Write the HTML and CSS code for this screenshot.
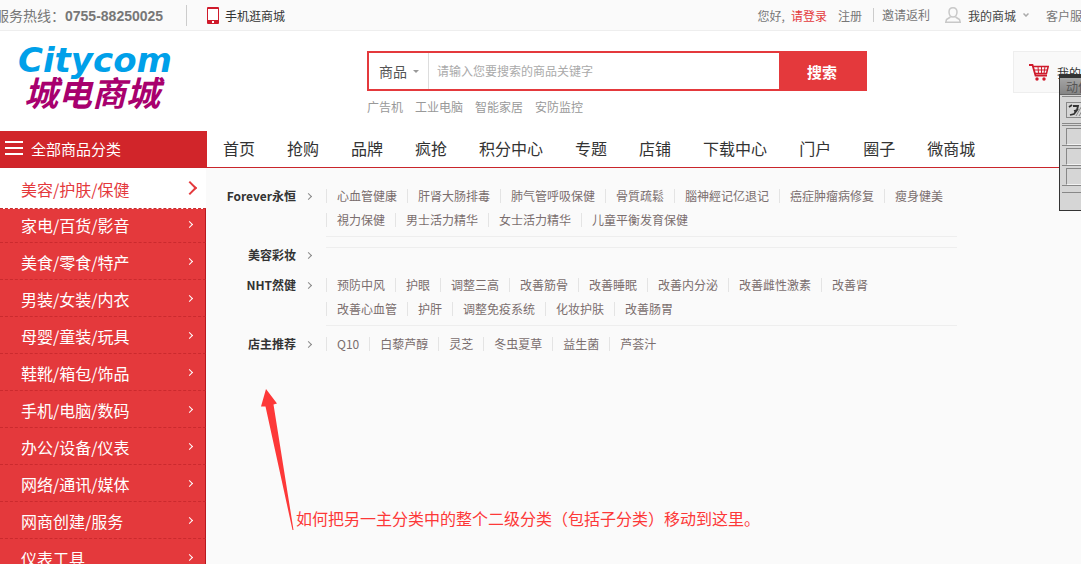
FILE: index.html
```html
<!DOCTYPE html>
<html lang="zh-CN">
<head>
    <meta charset="UTF-8">
    <meta name="viewport" content="width=device-width, initial-scale=1.0">
    <title>城电商城</title>
    <link rel="stylesheet" href="styles.css">
</head>
<body>
    <!-- 顶部栏 -->
    <div class="topbar">
        <div class="hotline">服务热线：<b>0755-88250025</b></div>
        <a class="mobile" href="#">
            <svg width="12" height="17" viewBox="0 0 12 17">
                <rect width="12" height="17" rx="1" fill="#cf1a2b"/>
                <rect x="1" y="2" width="10" height="11" fill="#fff"/>
                <rect x="5" y="14" width="2" height="2" fill="#fff"/>
            </svg>
            手机逛商城
        </a>
        <div class="user-links">
            <span>您好,</span>
            <a class="login" href="#">请登录</a>
            <a class="register" href="#">注册</a>
            <a class="rebate" href="#">邀请返利</a>
            <a class="my-mall" href="#">
                <svg width="16" height="16" viewBox="0 0 16 16" fill="none" stroke="#c8c8c8" stroke-width="1.5">
                    <path d="M8 .8C5.200.8 4 2.500 4 5s1.500 5 4 5 4-2.500 4-5S10.800.8 8 .8z"/>
                    <path d="M5.500 10L1.500 12.500.8 15.200h14.400l-.7-2.700-4-2.500"/>
                </svg>
                我的商城
                <svg class="caret" width="6" height="4" viewBox="0 0 6 4" fill="none" stroke="#aaa" stroke-width="1.500">
                    <path d="M.5.5L3 3 5.500.5"/>
                </svg>
            </a>
            <a href="#">客户服务</a>
        </div>
    </div>

    <!-- 头部 -->
    <header class="header">
        <a class="logo" href="#">
            <span class="logo-en">Citycom</span>
            <span class="logo-cn">城电商城</span>
        </a>
        <div class="search">
            <form class="search-form">
                <div class="search-type">
                    <select aria-label="搜索类型">
                        <option>商品</option>
                        <option>店铺</option>
                    </select>
                </div>
                <input type="text" aria-label="关键字" placeholder="请输入您要搜索的商品关键字">
                <button type="button">搜索</button>
            </form>
            <div class="keywords">
                <a href="#">广告机</a>
                <a href="#">工业电脑</a>
                <a href="#">智能家居</a>
                <a href="#">安防监控</a>
            </div>
        </div>
        <a class="cart" href="#">
            <svg width="20" height="17" viewBox="0 0 20 17" fill="none" stroke="#cf1a2b">
                <path d="M0 1h3.500l3 10.500H18" stroke-width="1.800"/>
                <path d="M4 2.500h15.200L17.500 9.500H6" stroke-width="1.500"/>
                <path d="M5 6h13M9 2.500l.5 7M12.500 2.500v7M16 2.500l-1 7"/>
                <circle cx="8" cy="15" r="1.700" fill="#cf1a2b" stroke="none"/>
                <circle cx="15" cy="15" r="1.700" fill="#cf1a2b" stroke="none"/>
            </svg>
            我的购物车
        </a>
    </header>

    <!-- 主导航 -->
    <nav class="nav">
        <a class="all-cats" href="#">
            <svg width="18" height="14" viewBox="0 0 18 14" fill="#fff">
                <path d="M0 0h18v2H0zM0 6h18v2H0zM0 12h18v2H0z"/>
            </svg>
            全部商品分类
        </a>
        <div class="nav-links">
            <a href="#">首页</a>
            <a href="#">抢购</a>
            <a href="#">品牌</a>
            <a href="#">疯抢</a>
            <a href="#">积分中心</a>
            <a href="#">专题</a>
            <a href="#">店铺</a>
            <a href="#">下载中心</a>
            <a href="#">门户</a>
            <a href="#">圈子</a>
            <a href="#">微商城</a>
        </div>
    </nav>

    <div class="main">
        <!-- 一级分类 -->
        <ul class="cats">
            <li class="active"><a href="#">美容/护肤/保健</a></li>
            <li><a href="#">家电/百货/影音</a></li>
            <li><a href="#">美食/零食/特产</a></li>
            <li><a href="#">男装/女装/内衣</a></li>
            <li><a href="#">母婴/童装/玩具</a></li>
            <li><a href="#">鞋靴/箱包/饰品</a></li>
            <li><a href="#">手机/电脑/数码</a></li>
            <li><a href="#">办公/设备/仪表</a></li>
            <li><a href="#">网络/通讯/媒体</a></li>
            <li><a href="#">网商创建/服务</a></li>
            <li><a href="#">仪表工具</a></li>
        </ul>

        <!-- 二级分类 -->
        <div class="panel">
            <dl>
                <dt>Forever永恒</dt>
                <dd>
                    <a href="#">心血管健康</a><a href="#">肝肾大肠排毒</a><a href="#">肺气管呼吸保健</a><a href="#">骨質疏鬆</a><a href="#">腦神經记亿退记</a><a href="#">癌症肿瘤病修复</a><a href="#">瘦身健美</a><a href="#">視力保健</a><a href="#">男士活力精华</a><a href="#">女士活力精华</a><a href="#">儿童平衡发育保健</a>
                </dd>
            </dl>
            <dl>
                <dt>美容彩妆</dt>
                <dd></dd>
            </dl>
            <dl>
                <dt>NHT然健</dt>
                <dd>
                    <a href="#">预防中风</a><a href="#">护眼</a><a href="#">调整三高</a><a href="#">改善筋骨</a><a href="#">改善睡眠</a><a href="#">改善内分泌</a><a href="#">改善雌性激素</a><a href="#">改善肾</a><a href="#">改善心血管</a><a href="#">护肝</a><a href="#">调整免疫系统</a><a href="#">化妆护肤</a><a href="#">改善肠胃</a>
                </dd>
            </dl>
            <dl>
                <dt>店主推荐</dt>
                <dd>
                    <a href="#">Q10</a><a href="#">白藜芦醇</a><a href="#">灵芝</a><a href="#">冬虫夏草</a><a href="#">益生菌</a><a href="#">芦荟汁</a>
                </dd>
            </dl>

            <!-- 标注 -->
            <div class="note">
                <svg width="34" height="142" viewBox="0 0 34 142" fill="#fd3838">
                    <path d="M5 1L16 15.500 12.500 16.500 32.500 142h-1L4.500 18.500 0 18.500z"/>
                </svg>
                <p>如何把另一主分类中的整个二级分类（包括子分类）移动到这里。</p>
            </div>
        </div>
    </div>

    <!-- 浮动工具窗 -->
    <div class="tool-window">
        <div class="tool-title">动作</div>
        <div class="tool-head">
            <svg width="18" height="16" viewBox="0 0 18 16" fill="none" stroke="#333">
                <rect x=".5" y=".5" width="20" height="15" stroke="#888"/>
                <path d="M3 5l3-2M4 13l4-1 4-5M7 4h5l-1 4-3 1" stroke-width="1.800"/>
                <path d="M10 14l4-7 2-3M13 14l3-5" stroke="#888"/>
            </svg>
        </div>
        <div class="tool-row"></div>
        <div class="tool-row"></div>
        <div class="tool-row"></div>
        <div class="tool-foot"></div>
    </div>
</body>
</html>
```
FILE: styles.css
```css
* {
    box-sizing: border-box;
}

body {
    font-family: "Noto Sans CJK SC", sans-serif;
    font-size: 12px;
    margin: 0;
    height: 100vh;
    display: flex;
    flex-direction: column;
    position: relative;
    overflow: hidden;
    color: #333;
    background-color: #fff;
}

a {
    color: inherit;
    text-decoration: none;
}

svg {
    display: block;
    flex: none;
}

/* 顶部栏 */
.topbar {
    display: flex;
    flex: none;
    align-items: center;
    height: 31px;
    white-space: nowrap;
    color: #777;
    background-color: #fafafa;
    border-bottom: 1px solid #eee;
}

.hotline {
    margin-left: -5px;
    padding-right: 23px;
    font-size: 14px;
    line-height: 20px;
    border-right: 1px solid #ccc;
}

.hotline b {
    font-family: "Liberation Sans", Arial, sans-serif;
}

.mobile {
    display: flex;
    align-items: center;
    gap: 6px;
    margin-left: 20px;
    color: #333;
}

.user-links {
    display: flex;
    align-items: center;
    margin-left: auto;
    margin-right: -13px;
}

.login {
    margin-left: 6px;
    color: #e4393c;
}

.register {
    margin-left: 11px;
    padding-right: 11px;
}

.rebate {
    padding-left: 8px;
    line-height: 14px;
    border-left: 1px solid #ccc;
}

.my-mall {
    display: flex;
    align-items: center;
    gap: 7px;
    margin: 0 17px 0 15px;
    color: #444;
}

/* 头部 */
.header {
    display: flex;
    flex: none;
    align-items: flex-start;
    height: 100px;
    padding-top: 20px;
}

.logo {
    display: flex;
    flex: none;
    flex-direction: column;
    width: 367px;
    padding-left: 18px;
    margin-top: -8px;
    font-weight: bold;
    font-style: italic;
}

.logo-en {
    font-family: "DejaVu Sans", sans-serif;
    font-size: 34px;
    line-height: 34px;
    color: #00a0e9;
}

.logo-cn {
    padding-left: 6px;
    font-size: 34px;
    line-height: 30px;
    color: #a8006e;
}

.search {
    width: 500px;
}

.search-form {
    display: flex;
    height: 40px;
    border: 2px solid #e4393c;
}

.search-type {
    display: flex;
    align-items: center;
    width: 60px;
    padding-left: 10px;
    border-right: 1px solid #ddd;
}

.search-type::after {
    content: "";
    margin-left: 6px;
    border: 3px solid transparent;
    border-top-color: #999;
    border-bottom: none;
}

.search-type select {
    width: 28px;
    padding: 0;
    font-family: inherit;
    font-size: 14px;
    color: #555;
    background: none;
    border: none;
    appearance: none;
}

.search-form input {
    flex: 1;
    min-width: 0;
    padding: 0 8px 2px;
    font-family: inherit;
    font-size: 12px;
    border: none;
    outline: none;
}

.search-form input::placeholder {
    color: #aaa;
}

.search-form button {
    width: 86px;
    padding: 0;
    font-family: inherit;
    font-size: 15px;
    font-weight: bold;
    color: #fff;
    background-color: #e4393c;
    border: none;
    cursor: pointer;
}

.keywords {
    display: flex;
    gap: 12px;
    margin-top: 7px;
    line-height: 18px;
    color: #999;
}

.cart {
    display: flex;
    flex: none;
    align-items: center;
    gap: 8px;
    width: 130px;
    height: 42px;
    margin-left: auto;
    margin-right: -62px;
    padding-left: 15px;
    background-color: #f9f9f9;
    border: 1px solid #eee;
}

/* 主导航 */
.nav {
    display: flex;
    flex: none;
    height: 37px;
    white-space: nowrap;
    border-bottom: 1px solid #c9252b;
}

.all-cats {
    display: flex;
    align-items: center;
    gap: 8px;
    width: 207px;
    padding: 0 0 2px 5px;
    font-size: 15px;
    color: #fff;
    background-color: #d1252a;
}

.nav-links {
    display: flex;
    align-items: center;
    gap: 32px;
    padding: 0 0 2px 16px;
    font-size: 16px;
}

.main {
    display: flex;
    flex: 1;
    min-height: 0;
}

/* 一级分类 */
.cats {
    flex: none;
    width: 206px;
    margin: 0;
    padding: 0;
    list-style: none;
    font-size: 16px;
    color: #fff;
    background-color: #e4393c;
}

.cats li {
    display: flex;
    align-items: center;
    height: 37px;
    padding: 0 13px 0 21px;
    border-right: 1px solid #b8191f;
    border-bottom: 1px dashed #cb2a2e;
}

.cats a {
    flex: 1;
    padding-top: 1px;
}

.cats li::after {
    content: "";
    width: 4px;
    height: 4px;
    border: solid #fff;
    border-width: 1px 1px 0 0;
    transform: rotate(45deg);
}

.cats .active {
    position: relative;
    height: 41px;
    margin-bottom: -3px;
    padding-right: 11px;
    color: #e4393c;
    background-color: #fff;
    border-right: none;
}

.cats .active::after {
    width: 8px;
    height: 8px;
    border-color: #e4393c;
    border-width: 2px 2px 0 0;
}

/* 二级分类 */
.panel {
    flex: 1;
    position: relative;
    padding-top: 10px;
    background-color: #fafafa;
}

dl {
    display: flex;
    align-items: flex-start;
    margin: 0;
    padding-top: 6px;
    line-height: 24px;
}

dt {
    display: flex;
    align-items: center;
    justify-content: flex-end;
    gap: 10px;
    width: 105px;
    font-weight: bold;
}

dt::after {
    content: "";
    width: 4px;
    height: 4px;
    border: solid #888;
    border-width: 1px 1px 0 0;
    transform: rotate(45deg);
}

dd {
    display: flex;
    flex-wrap: wrap;
    width: 631px;
    margin: 0 0 0 15px;
    padding-bottom: 4px;
    color: #7a6e6e;
    border-bottom: 1px solid #eee;
}

dl:nth-of-type(4) dd {
    border-bottom: none;
}

dd a {
    margin: 5px 0;
    padding: 0 10px;
    line-height: 14px;
    border-left: 1px solid #e4e4e4;
}

/* 标注 */
.note {
    display: flex;
    align-items: flex-end;
    position: absolute;
    left: 55px;
    top: 220px;
    gap: 1px;
    white-space: nowrap;
    color: #fd3838;
}

.note p {
    margin: 0;
    font-size: 16px;
    line-height: 24px;
}

/* 浮动工具窗 */
.tool-window {
    position: absolute;
    top: 74px;
    right: 0;
    width: 22px;
    height: 137px;
    overflow: hidden;
    white-space: nowrap;
    background-color: #d6d6d6;
    border: 1px solid #333;
    border-width: 4px 0 1px 1px;
}

.tool-title {
    height: 17px;
    padding-left: 6px;
    line-height: 17px;
    color: #555;
    background: linear-gradient(#a5a5a5, #858585);
    border-bottom: 1px solid #666;
}

.tool-head {
    height: 30px;
    margin: 1px 0 0 2px;
    padding: 5px 0 0 4px;
    border-top: 1px solid #888;
    border-bottom: 3px double #888;
}

.tool-row {
    height: 20px;
    margin-left: 2px;
    padding: 2px 0 2px 4px;
    border-bottom: 1px solid #888;
}

.tool-row::before {
    content: "";
    display: block;
    height: 15px;
    border: 1px solid #888;
    border-bottom-color: #f2f2f2;
    border-right: none;
}

.tool-foot {
    height: 7px;
    margin-left: 2px;
    border-bottom: 1px solid #888;
}
```
